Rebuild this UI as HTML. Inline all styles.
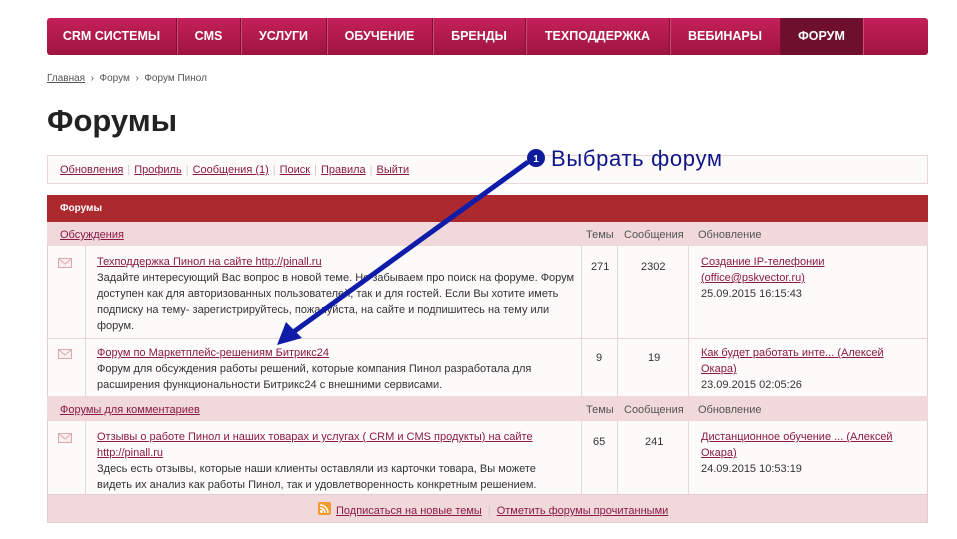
<!DOCTYPE html><html><head><meta charset="utf-8"><style>
*{margin:0;padding:0;box-sizing:border-box}
body{width:957px;height:539px;background:#fff;font-family:"Liberation Sans",Arial,sans-serif;position:relative;overflow:hidden;color:#333}
a{color:#8b1a45;text-decoration:underline}
.nav{position:absolute;left:47px;top:18px;width:881px;height:37px;background:linear-gradient(#c4205a,#9e1440);border-radius:3px;display:flex}
.nav div{color:#fff;font-weight:bold;font-size:12.5px;line-height:37px;text-align:center;border-right:1px solid #7e0f33;box-shadow:1px 0 0 #d04a78}
.nav .act{background:#6e0f2e}
.bc{position:absolute;left:47px;top:73px;font-size:10px;color:#555}
.bc a{color:#555}
h1{position:absolute;left:47px;top:103px;font-size:31px;font-weight:bold;color:#222}
.links{position:absolute;left:47px;top:155px;width:881px;height:29px;border:1px solid #ebd6d9;background:#fdfafa;font-size:11px;line-height:28px;padding-left:12px}
.links span{color:#ccc;margin:0 4px}
.abs{position:absolute}
.cell{position:absolute;font-size:11px;line-height:16px}
.bd{position:absolute;background:#ead6da}
</style></head><body>
<div class="nav">
<div style="width:130px">CRM СИСТЕМЫ</div><div style="width:64px">CMS</div><div style="width:86px">УСЛУГИ</div><div style="width:106px">ОБУЧЕНИЕ</div><div style="width:93px">БРЕНДЫ</div><div style="width:144px">ТЕХПОДДЕРЖКА</div><div style="width:111px">ВЕБИНАРЫ</div><div class="act" style="width:82px">ФОРУМ</div>
</div>
<div class="bc"><a>Главная</a> &nbsp;›&nbsp; Форум &nbsp;›&nbsp; Форум Пинол</div>
<h1>Форумы</h1>
<div class="links"><a>Обновления</a><span>|</span><a>Профиль</a><span>|</span><a>Сообщения (1)</a><span>|</span><a>Поиск</a><span>|</span><a>Правила</a><span>|</span><a>Выйти</a></div>

<div class="abs" style="left:47px;top:195px;width:881px;height:328px;border:1px solid #e3cdd1;background:#fdfafa"></div>
<div class="abs" style="left:47px;top:195px;width:881px;height:27px;background:#ac2a2e;color:#fff;font-weight:bold;font-size:10px;line-height:28px;padding-left:13px">Форумы</div>
<div class="abs" style="left:47px;top:222px;width:881px;height:24px;background:#f0d8db"></div>
<div class="abs" style="left:47px;top:396px;width:881px;height:25px;background:#f0d8db"></div>
<div class="abs" style="left:47px;top:494px;width:881px;height:29px;background:#f0d8db;border:1px solid #e3cdd1"></div>
<div class="bd" style="left:47px;top:338px;width:881px;height:1px"></div>
<div class="bd" style="left:85px;top:246px;width:1px;height:150px"></div>
<div class="bd" style="left:581px;top:246px;width:1px;height:150px"></div>
<div class="bd" style="left:617px;top:246px;width:1px;height:150px"></div>
<div class="bd" style="left:688px;top:246px;width:1px;height:150px"></div>
<div class="bd" style="left:85px;top:421px;width:1px;height:73px"></div>
<div class="bd" style="left:581px;top:421px;width:1px;height:73px"></div>
<div class="bd" style="left:617px;top:421px;width:1px;height:73px"></div>
<div class="bd" style="left:688px;top:421px;width:1px;height:73px"></div>

<div class="cell" style="left:60px;top:227px"><a>Обсуждения</a></div>
<div class="cell" style="left:586px;top:227px;color:#555">Темы</div>
<div class="cell" style="left:624px;top:227px;color:#555">Сообщения</div>
<div class="cell" style="left:698px;top:227px;color:#555">Обновление</div>
<div class="cell" style="left:60px;top:402px"><a>Форумы для комментариев</a></div>
<div class="cell" style="left:586px;top:402px;color:#555">Темы</div>
<div class="cell" style="left:624px;top:402px;color:#555">Сообщения</div>
<div class="cell" style="left:698px;top:402px;color:#555">Обновление</div>

<svg class="abs" style="left:58px;top:258px" width="14" height="10"><rect x=".5" y=".5" width="13" height="9" fill="#fbeeee" stroke="#d9a9b0"/><path d="M1 1l6 5 6-5" fill="none" stroke="#d9a9b0"/></svg>
<svg class="abs" style="left:58px;top:349px" width="14" height="10"><rect x=".5" y=".5" width="13" height="9" fill="#fbeeee" stroke="#d9a9b0"/><path d="M1 1l6 5 6-5" fill="none" stroke="#d9a9b0"/></svg>
<svg class="abs" style="left:58px;top:433px" width="14" height="10"><rect x=".5" y=".5" width="13" height="9" fill="#fbeeee" stroke="#d9a9b0"/><path d="M1 1l6 5 6-5" fill="none" stroke="#d9a9b0"/></svg>

<div class="cell" style="left:97px;top:254px;width:480px"><a>Техподдержка Пинол на сайте http://pinall.ru</a><br>Задайте интересующий Вас вопрос в новой теме. Не забываем про поиск на форуме. Форум доступен как для авторизованных пользователей, так и для гостей. Если Вы хотите иметь подписку на тему- зарегистрируйтесь, пожалуйста, на сайте и подпишитесь на тему или форум.</div>
<div class="cell" style="left:591px;top:259px">271</div>
<div class="cell" style="left:641px;top:259px">2302</div>
<div class="cell" style="left:701px;top:254px;width:220px"><a>Создание IP-телефонии (office@pskvector.ru)</a><br>25.09.2015 16:15:43</div>

<div class="cell" style="left:97px;top:345px;width:480px"><a>Форум по Маркетплейс-решениям Битрикс24</a><br>Форум для обсуждения работы решений, которые компания Пинол разработала для расширения функциональности Битрикс24 с внешними сервисами.</div>
<div class="cell" style="left:596px;top:350px">9</div>
<div class="cell" style="left:648px;top:350px">19</div>
<div class="cell" style="left:701px;top:345px;width:200px"><a>Как будет работать инте... (Алексей Окара)</a><br>23.09.2015 02:05:26</div>

<div class="cell" style="left:97px;top:429px;width:440px"><a>Отзывы о работе Пинол и наших товарах и услугах ( CRM и CMS продукты) на сайте http://pinall.ru</a><br>Здесь есть отзывы, которые наши клиенты оставляли из карточки товара, Вы можете видеть их анализ как работы Пинол, так и удовлетворенность конкретным решением.</div>
<div class="cell" style="left:593px;top:434px">65</div>
<div class="cell" style="left:645px;top:434px">241</div>
<div class="cell" style="left:701px;top:429px;width:200px"><a>Дистанционное обучение ... (Алексей Окара)</a><br>24.09.2015 10:53:19</div>

<svg class="abs" style="left:318px;top:502px" width="13" height="13"><rect width="13" height="13" rx="2" fill="#f39b2a"/><circle cx="3.5" cy="9.5" r="1.5" fill="#fff"/><path d="M2 6a5 5 0 0 1 5 5M2 3a8 8 0 0 1 8 8" fill="none" stroke="#fff" stroke-width="1.6"/></svg>
<div class="cell" style="left:336px;top:503px"><a>Подписаться на новые темы</a><span style="color:#ccc;margin:0 6px">|</span><a>Отметить форумы прочитанными</a></div>

<svg class="abs" style="left:0;top:0" width="957" height="539">
<line x1="528" y1="162" x2="292" y2="333" stroke="#0f1ca8" stroke-width="5"/>
<polygon points="277,345 286,322 302,338" fill="#0f1ca8"/>
<circle cx="536" cy="158" r="9" fill="#0f1a9a"/>
<text x="536" y="162" fill="#fff" font-size="10" font-weight="bold" text-anchor="middle" font-family="Liberation Sans">1</text>
<text x="551" y="166" fill="#10148a" font-size="22" textLength="171" font-family="Liberation Sans">Выбрать форум</text>
</svg>
</body></html>
